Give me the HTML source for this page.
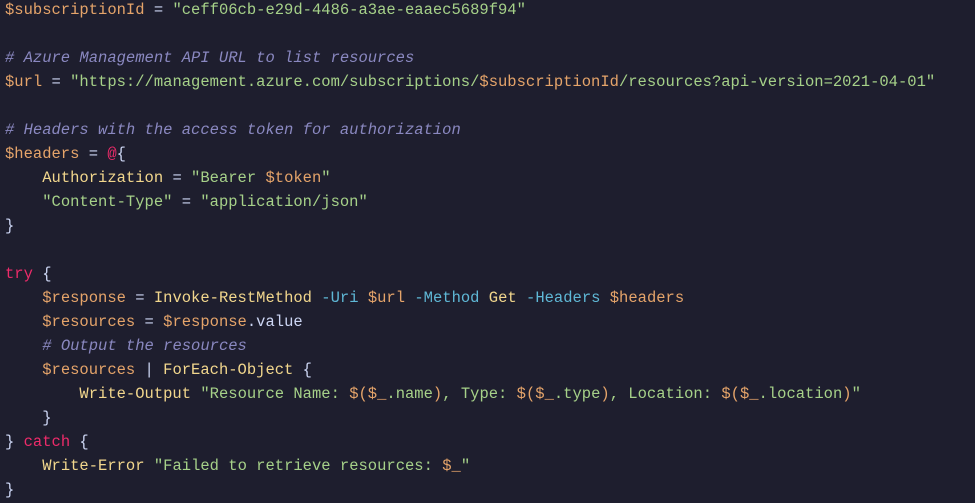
<!DOCTYPE html>
<html><head><style>
html,body{margin:0;padding:0;background:#1e1e2e;width:975px;height:503px;overflow:hidden}
pre{margin:0;position:absolute;left:5px;top:-2px;font-family:"Liberation Mono",monospace;font-size:15.5px;line-height:24px;color:#cdd6f4}
.v{color:#e5a46a}.s{color:#a6d189}.c{color:#8a88c0;font-style:italic}.k{color:#ed2b6a}.f{color:#f2d78d}.p{color:#5fb8d6}
</style></head><body><pre><span class="v">$subscriptionId</span> = <span class="s">"ceff06cb-e29d-4486-a3ae-eaaec5689f94"</span>

<span class="c"># Azure Management API URL to list resources</span>
<span class="v">$url</span> = <span class="s">"https://management.azure.com/subscriptions/</span><span class="v">$subscriptionId</span><span class="s">/resources?api-version=2021-04-01"</span>

<span class="c"># Headers with the access token for authorization</span>
<span class="v">$headers</span> = <span class="k">@</span>{
    <span class="f">Authorization</span> = <span class="s">"Bearer </span><span class="v">$token</span><span class="s">"</span>
    <span class="s">"Content-Type"</span> = <span class="s">"application/json"</span>
}

<span class="k">try</span> {
    <span class="v">$response</span> = <span class="f">Invoke-RestMethod</span> <span class="p">-Uri</span> <span class="v">$url</span> <span class="p">-Method</span> <span class="f">Get</span> <span class="p">-Headers</span> <span class="v">$headers</span>
    <span class="v">$resources</span> = <span class="v">$response</span>.value
    <span class="c"># Output the resources</span>
    <span class="v">$resources</span> | <span class="f">ForEach-Object</span> {
        <span class="f">Write-Output</span> <span class="s">"Resource Name: </span><span class="v">$(</span><span class="v">$_</span><span class="s">.name</span><span class="v">)</span><span class="s">, Type: </span><span class="v">$(</span><span class="v">$_</span><span class="s">.type</span><span class="v">)</span><span class="s">, Location: </span><span class="v">$(</span><span class="v">$_</span><span class="s">.location</span><span class="v">)</span><span class="s">"</span>
    }
} <span class="k">catch</span> {
    <span class="f">Write-Error</span> <span class="s">"Failed to retrieve resources: </span><span class="v">$_</span><span class="s">"</span>
}</pre></body></html>
